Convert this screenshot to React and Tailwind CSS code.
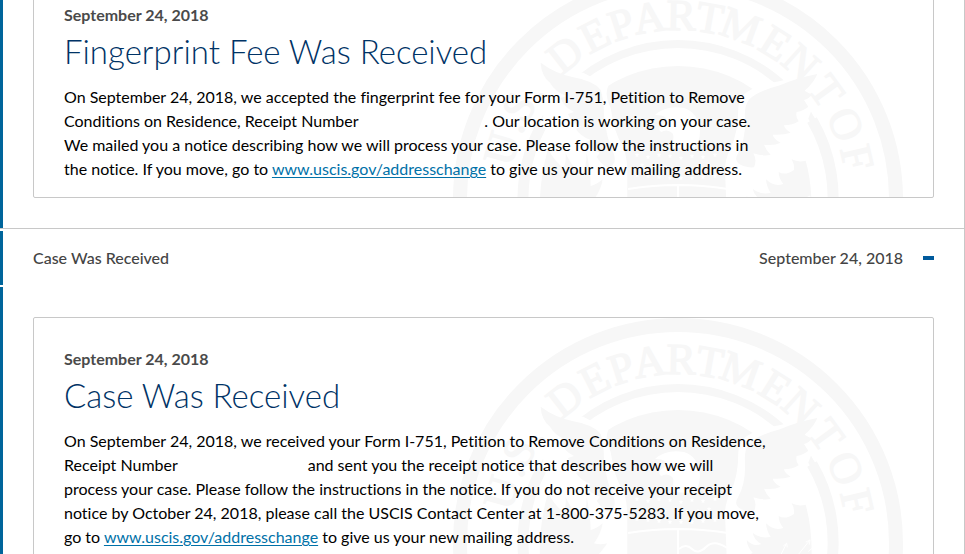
import { useState } from 'react'

const ENTRIES = [
  {
    id: 'fingerprint-fee',
    title: 'Fingerprint Fee Was Received',
    date: 'September 24, 2018',
    body: (
      <>
        On September 24, 2018, we accepted the fingerprint fee for your Form I-751, Petition to Remove
        <br />
        Conditions on Residence, Receipt Number <ReceiptNumber />. Our location is working on your case.
        <br />
        We mailed you a notice describing how we will process your case. Please follow the instructions in
        <br />
        the notice. If you move, go to <AddressLink /> to give us your new mailing address.
      </>
    ),
  },
  {
    id: 'case-received',
    title: 'Case Was Received',
    date: 'September 24, 2018',
    body: (
      <>
        On September 24, 2018, we received your Form I-751, Petition to Remove Conditions on Residence,
        <br />
        Receipt Number <ReceiptNumber /> and sent you the receipt notice that describes how we will
        <br />
        process your case. Please follow the instructions in the notice. If you do not receive your receipt
        <br />
        notice by October 24, 2018, please call the USCIS Contact Center at 1-800-375-5283. If you move,
        <br />
        go to <AddressLink /> to give us your new mailing address.
      </>
    ),
  },
]

// [letter, degrees clockwise from the top of the seal]
const SEAL_LETTERS = [
  ['U', -74],
  ['.', -66],
  ['S', -60],
  ['.', -53],
  ['D', -38],
  ['E', -27],
  ['P', -18],
  ['A', -9],
  ['R', 1],
  ['T', 10],
  ['M', 20],
  ['E', 32],
  ['N', 42],
  ['T', 54],
  ['O', 66],
  ['F', 77],
]

const STARS = [
  [-41, -44], [-30, -42], [-19, -44], [-8, -43], [3, -41], [14, -43], [25, -42], [37, -44],
  [-36, -34], [-24, -32], [-13, -32], [-2, -31], [9, -31], [20, -32], [31, -34],
  [-41, -24], [-30, -23], [-19, -22], [-8, -21], [3, -21], [14, -21], [25, -22], [37, -23],
]

function Seal() {
  return (
    <svg
      aria-hidden="true"
      viewBox="-225 -225 450 450"
      className="pointer-events-none absolute top-0 right-[30px] w-[450px] fill-[#f7f7f7] stroke-[#f7f7f7]"
    >
      <circle r="218" fill="none" strokeWidth="14" />
      <circle r="155" fill="none" strokeWidth="8" />
      <circle r="133" stroke="none" />

      {/* cut-outs that separate the wings from the disc and the inner ring */}
      <g fill="#fff" stroke="none">
        <path
          transform="translate(-8 -233) scale(.3333)"
          d="M430 318L335 344Q285 352 245 370Q207 388 205 425Q205 500 182 545Q165 580 165 610L170 740L170 960L520 960L500 740Q490 590 415 458L462 330Z"
        />
        <path
          transform="translate(-238 -233) scale(.3333)"
          d="M300 270L350 315L430 320L505 360Q492 385 512 425Q522 500 548 540Q562 570 562 620L562 960L200 960L240 732Q250 590 310 450L270 310Z"
        />
      </g>
      <path fill="none" strokeWidth="11" d="M134 -79A155 155 0 0 1 152 30A155 155 0 0 1 -152 30A155 155 0 0 1 -137 -73" />

      {/* right wing and the feathers under it */}
      <g transform="translate(-8 -233) scale(.3333)" stroke="none">
        <path d="M442 324Q380 336 330 358Q262 376 238 400Q222 420 225 455Q228 520 205 560Q192 580 205 592Q222 606 252 604Q262 582 250 562Q282 572 302 566Q288 552 282 536Q312 540 332 530Q312 520 308 506Q340 508 362 500Q344 490 342 478Q368 478 386 466Q376 452 380 438Q402 434 415 422L402 402Q418 398 425 386L404 374Q432 350 442 324Z" />
        <path d="M365 580Q385 590 407 584Q426 650 425 740L230 740L248 728Q232 712 230 690Q250 712 274 702Q252 690 248 668Q274 688 302 680Q290 664 288 640Q312 664 340 654Q326 636 326 618Q346 630 372 612Q374 596 365 580Z" />
        <path
          fill="none"
          stroke="#fff"
          strokeWidth="3"
          d="M330 740L350 700M340 708L350 700L352 712M380 740L420 690M408 696L420 690L418 704M415 725L455 686M442 690L455 686L450 698"
        />
      </g>

      {/* left wing and the feathers under it */}
      <g transform="translate(-238 -233) scale(.3333)" stroke="none">
        <path d="M302 290Q345 322 400 334Q460 344 482 372Q492 400 492 450Q500 520 522 565Q532 600 500 604Q480 590 470 572L480 560Q450 550 438 530L452 522Q420 510 408 488L424 482Q392 468 384 444L402 438Q372 424 362 396L380 390Q346 378 330 350Q304 330 302 290Z" />
        <path d="M324 548Q346 590 372 606Q380 580 376 560Q400 610 424 624Q440 610 440 560Q452 620 452 660Q470 656 488 640Q484 670 462 700Q480 706 502 700Q480 730 470 740L300 740Q296 650 324 548Z" />
      </g>

      {/* eagle head */}
      <path fill="#fff" stroke="none" d="M-23 -84Q-12 -94 6 -91Q20 -87 22 -68Q22 -55 15 -50L-9 -51Q-3 -59 -5 -65Q-10 -71 -17 -67Q-22 -72 -13 -76Q-8 -84 -23 -84Z" />
      <circle cx="-4" cy="-79" r="1" stroke="none" />

      {/* shield */}
      <g fill="#fff" stroke="none">
        {STARS.map(([x, y]) => (
          <path key={`${x},${y}`} transform={`translate(${x} ${y})`} d="M0-2.4L.7-.8L2.4-.7L1 .4L1.5 2.2L0 1.2L-1.5 2.2L-1 .4L-2.4-.7L-.7-.8Z" />
        ))}
      </g>
      <path fill="none" stroke="#fff" strokeWidth="2" d="M-50 -10Q0 -18 50 -10M0 -13V50M1 6Q8 0 14 6T28 4T49 5" />

      <g strokeWidth="1.3" fontSize="44" textAnchor="middle" className="font-['Liberation_Serif',serif]">
        {SEAL_LETTERS.map(([letter, angle]) => (
          <text key={angle} y="-169" transform={`rotate(${angle})`}>
            {letter}
          </text>
        ))}
      </g>
    </svg>
  )
}

function ReceiptNumber() {
  return <span className="inline-block w-[122px]" />
}

function AddressLink() {
  return (
    <a href="#addresschange" className="text-[#0071a8] underline underline-offset-2">
      www.uscis.gov/addresschange
    </a>
  )
}

function StatusCard({ entry }) {
  return (
    <article className="relative overflow-hidden rounded-xs border border-[#c8c8c8] px-[30px] pt-[29px] pb-4">
      <Seal />
      <div className="relative">
        <p className="font-bold text-[#4a4a4a]">{entry.date}</p>
        <h2 className="mb-[14px] pt-1 text-[33px] leading-10 font-light text-[#003366]">{entry.title}</h2>
        <p className="whitespace-nowrap text-black">{entry.body}</p>
      </div>
    </article>
  )
}

function HistoryItem({ entry }) {
  const [open, setOpen] = useState(true)

  return (
    <li className="border-b border-[#c8c8c8]">
      <button
        type="button"
        aria-expanded={open}
        aria-controls={entry.id}
        onClick={() => setOpen(!open)}
        className="mt-[2px] flex h-[54px] w-full items-center border-l-3 border-[#00659b] px-[30px] pb-px font-medium text-[#444]"
      >
        <span>{entry.title}</span>
        <span className="ml-auto">{entry.date}</span>
        <span className="ml-5 h-1 w-[11px] bg-[#005a9c]" />
      </button>
      {open && (
        <div id={entry.id} className="mt-[2px] border-l-3 border-[#00659b] p-[30px]">
          <StatusCard entry={entry} />
        </div>
      )}
    </li>
  )
}

export default function App() {
  return (
    <main className="h-screen overflow-hidden border-r border-[#c8c8c8] bg-white font-['Lato',sans-serif] text-base leading-6 [font-variant-ligatures:none]">
      {/* scrolled part-way into the first entry */}
      <ul className="-mt-[115px]">
        {ENTRIES.map(entry => (
          <HistoryItem key={entry.id} entry={entry} />
        ))}
      </ul>
    </main>
  )
}
